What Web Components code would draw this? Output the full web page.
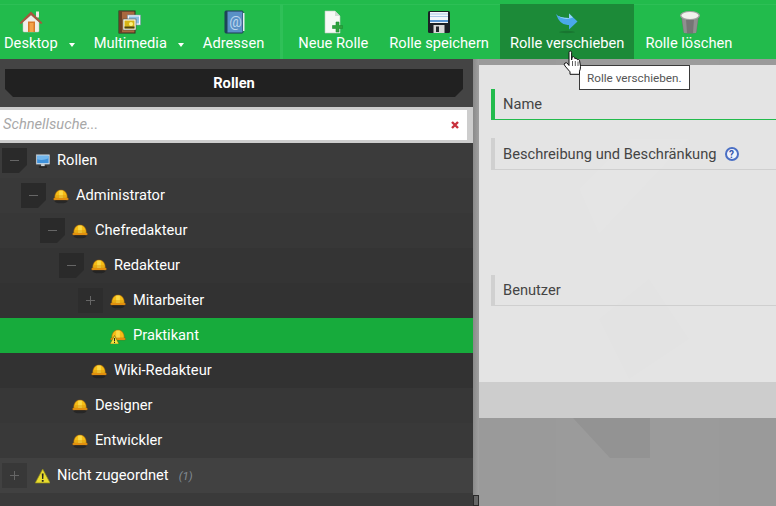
<!DOCTYPE html>
<html lang="de">
<head>
<meta charset="utf-8">
<title>Rollen</title>
<style>
    html, body { margin: 0; height: 506px; overflow: hidden; }
    body { font-family: Roboto, "Liberation Sans", sans-serif; font-size: 14.67px; background: #9a9a9a; }
    main-view { height: 447px; }
</style>
</head>
<body>
<template id="icons">
    <svg data-name="home" viewBox="0 0 24 24"><path d="M4 12v9q0 1 1 1h14q1 0 1-1v-9L12 5z" fill="#f1eeea" stroke="#c9c4bd" stroke-width=".5"/><rect x="17" y="1.500" width="3" height="6" fill="#efe9e2"/><path d="M0.500 13 12 1.500 23.500 13 22 14 12 5 2 14z" fill="#a9553e"/><rect x="9" y="11.500" width="7" height="10.500" fill="#d9792a"/><rect x="10.500" y="13" width="4" height="9" fill="#f4a24a"/></svg>
    <svg data-name="media" viewBox="0 0 24 24"><rect x="1" y="1" width="16" height="22" fill="#a9683f" stroke="#3b2a1e"/><rect x="1" y="1" width="3" height="22" fill="#6b3f26"/><rect x="9.500" y="5" width="13" height="10" fill="#f3f7fb" stroke="#7d98ac" stroke-width=".6"/><rect x="11" y="6.500" width="10" height="7" fill="#8dbfe6"/><rect x="5" y="9" width="13" height="11" fill="#fdfdf6" stroke="#4d4d3e" stroke-width=".6"/><rect x="6.500" y="10.500" width="10" height="8" fill="#d8b414"/><path d="M6.500 16.500h10v2h-10z" fill="#4d4514"/><circle cx="13" cy="14" r="2" fill="#fff27e"/></svg>
    <svg data-name="book" viewBox="0 0 24 24"><rect x="3" y="1" width="18" height="22" rx="1" fill="#5a90c6" stroke="#1f3a52"/><rect x="3" y="1" width="2.500" height="22" fill="#1c4458"/><path d="M21 3h1.500v18H21z" fill="#e8eef3"/><text x="13.500" y="17" font-family="Roboto, sans-serif" font-size="14" fill="#bcd6ee" text-anchor="middle">@</text></svg>
    <svg data-name="new" viewBox="0 0 24 24"><path d="M4 1h10l5 5v17H4z" fill="#f6f9f6" stroke="#b8c9bc" stroke-width=".6"/><path d="M14 1v5h5z" fill="#cfdcd3"/><path d="M15 12h3v3.500h3.500v3H18V22h-3v-3.500h-3.500v-3H15z" fill="#2ea23e" stroke="#1d8f33" stroke-width=".6"/></svg>
    <svg data-name="save" viewBox="0 0 24 24"><rect x="1" y="1" width="22" height="22" rx="1.500" fill="#1c2026"/><rect x="3" y="2" width="18" height="11" fill="#f3f6fa"/><path d="M3 4h18M3 6.500h18" stroke="#a8c7e6" stroke-width="1"/><rect x="3" y="10" width="18" height="2" fill="#5b97d6"/><rect x="6.500" y="15" width="11" height="8" fill="#d7d7d7"/><rect x="9" y="16.500" width="3" height="5.500" fill="#23272d"/></svg>
    <svg data-name="move" viewBox="0 0 24 24"><ellipse cx="12" cy="22" rx="8" ry="1.200" fill="#000" opacity=".14"/><path d="M1 4q3 4 13 4V3.500l8.500 8-8.500 8V15q-9 1-13-11z" fill="#4aa8ea"/><path d="M1 4q3 4 13 4V3.500l4 4q-10 4-17-3.500z" fill="#95d4f8"/></svg>
    <svg data-name="trash" viewBox="0 0 24 24"><path d="M4 5l2.500 17q.2 1.500 6.500 1.500t6.500-1.500L22 5z" fill="#757575"/><path d="M9 9l1 14H7L5 8zM17 9l-1 14h3l2-15z" fill="#8f8f8f"/><ellipse cx="13" cy="5.500" rx="10" ry="4.500" fill="#a4a4a4"/><ellipse cx="13" cy="5.500" rx="8.500" ry="3.500" fill="#f2f2ee"/></svg>
    <svg data-name="monitor" viewBox="-2 -1 18 18"><rect x=".5" y="1" width="15" height="10.500" fill="#e6eaee" stroke="#aab4bd" stroke-width=".6"/><rect x="1.500" y="2" width="13" height="8.500" fill="#3f92dc"/><path d="M1.500 2h13v3q-7 3-13 1z" fill="#72b6ec"/><rect x="6" y="11.500" width="4" height="2.500" fill="#cfd4d8"/><rect x="3.500" y="14" width="9" height="1.500" fill="#1e1e1e"/></svg>
    <svg data-name="hat" viewBox="0 0 16 16"><ellipse cx="8" cy="13.300" rx="6.500" ry="2" fill="#111" opacity=".45"/><path d="M1.700 10.500q0-8.500 6.300-8.500t6.300 8.500z" fill="#f6bd16" stroke="#a8670a" stroke-width=".6"/><path d="M6.100 2.500h3.800v7.500H6.100z" fill="#fbd945"/><path d="M2.500 8h11" stroke="#d8930e" stroke-width=".8"/><rect x=".5" y="10" width="15" height="2" rx="1" fill="#f59d12" stroke="#8f5208" stroke-width=".4"/></svg>
    <svg data-name="hatwarn" viewBox="0 0 16 16"><path d="M1.700 10.500q0-8.500 6.300-8.500t6.300 8.500z" fill="#f6bd16" stroke="#a8670a" stroke-width=".6"/><path d="M6.100 2.500h3.800v7.500H6.100z" fill="#fbd945"/><rect x=".5" y="10" width="15" height="2" rx="1" fill="#f59d12" stroke="#8f5208" stroke-width=".4"/><path d="M4.500 7.500 9 16H0z" fill="#f3e53c" stroke="#55520e" stroke-width=".5"/><path d="M4 10h1v3H4zM4 13.800h1V15H4z" fill="#222"/></svg>
    <svg data-name="warn" viewBox="-.7 0 16 16"><path d="M8 1 15.500 15H.5z" fill="#e9dc2e" stroke="#8f8a1a" stroke-width=".7"/><path d="M7.100 5.500h1.800l-.3 5.500H7.400zM7.100 12h1.800v1.800H7.100z" fill="#222"/></svg>
</template>

<app-toolbar>
    <tool-button plain label="Desktop" caret><app-icon name="home"></app-icon></tool-button>
    <tool-button plain label="Multimedia" caret><app-icon name="media"></app-icon></tool-button>
    <tool-button plain label="Adressen"><app-icon name="book"></app-icon></tool-button>
    <tool-divider></tool-divider>
    <tool-button label="Neue Rolle"><app-icon name="new"></app-icon></tool-button>
    <tool-button label="Rolle speichern"><app-icon name="save"></app-icon></tool-button>
    <tool-button label="Rolle verschieben" active><app-icon name="move"></app-icon></tool-button>
    <tool-button label="Rolle löschen"><app-icon name="trash"></app-icon></tool-button>
</app-toolbar>

<main-view>
    <side-panel slot="side" title-text="Rollen">
        <quick-search placeholder="Schnellsuche..."></quick-search>
        <role-row depth="0" toggle="minus" shade="#3b3b3b" icon="monitor">Rollen</role-row>
        <role-row depth="1" toggle="minus" shade="#393939" icon="hat">Administrator</role-row>
        <role-row depth="2" toggle="minus" shade="#373737" icon="hat">Chefredakteur</role-row>
        <role-row depth="3" toggle="minus" shade="#343434" icon="hat">Redakteur</role-row>
        <role-row depth="4" toggle="plus" shade="#323232" icon="hat">Mitarbeiter</role-row>
        <role-row depth="4" selected icon="hatwarn">Praktikant</role-row>
        <role-row depth="3" shade="#323232" icon="hat">Wiki-Redakteur</role-row>
        <role-row depth="2" shade="#373737" icon="hat">Designer</role-row>
        <role-row depth="2" shade="#393939" icon="hat">Entwickler</role-row>
        <role-row depth="0" toggle="plus" shade="#414141" icon="warn" count="(1)">Nicht zugeordnet</role-row>
    </side-panel>
    <detail-panel slot="detail">
        <form-head accent style="margin-top:24px">Name</form-head>
        <form-head help style="margin-top:18px;height:31px;padding-top:1px;height:30px">Beschreibung und Beschränkung</form-head>
        <form-head style="margin-top:105px">Benutzer</form-head>
    </detail-panel>
</main-view>

<hint-tip>Rolle verschieben.</hint-tip>
<hand-cursor></hand-cursor>

<script>
    const iconSource = document.getElementById('icons').content;

    class AppIcon extends HTMLElement {
        connectedCallback() {
            const shadow = this.shadowRoot || this.attachShadow({ mode: 'open' });
            shadow.innerHTML = `<style>:host { display: block; line-height: 0; } svg { width: 100%; height: 100%; display: block; }</style>`;
            const svg = iconSource.querySelector(`[data-name="${this.getAttribute('name')}"]`);
            shadow.appendChild(svg.cloneNode(true));
        }
    }

    class AppToolbar extends HTMLElement {
        constructor() {
            super();
            this.attachShadow({ mode: 'open' }).innerHTML = `
                <style>
                    :host {
                        display: flex;
                        height: 55px;
                        padding-left: 4px;
                        border-top: 4px solid #22bb4c;
                        background: #22bb4c;
                        box-shadow: inset 0 1px 0 #2dbf56;
                        color: #fff;
                    }
                </style>
                <slot></slot>
            `;
        }
    }

    class ToolButton extends HTMLElement {
        constructor() {
            super();
            const caret = this.hasAttribute('caret') ? '<span class="caret"></span>' : '';
            this.attachShadow({ mode: 'open' }).innerHTML = `
                <style>
                    :host {
                        display: flex;
                        align-items: flex-start;
                        padding: 0 10px;
                        margin-right: 1px;
                    }
                    :host([plain]) { padding: 0; margin-right: 0; }
                    :host([caret]) { margin-right: 19px; }
                    :host([active]) { background: #1c8a38; }
                    .body { display: flex; flex-direction: column; align-items: center; }
                    .icon { width: 24px; height: 24px; margin-top: 6px; }
                    ::slotted(app-icon) { width: 24px; height: 24px; }
                    .label { margin-top: -2px; line-height: 22px; white-space: nowrap; }
                    .caret {
                        margin: 39px 0 0 11px;
                        border: 3.500px solid transparent;
                        border-top: 4px solid #fff;
                        border-bottom: 0;
                    }
                </style>
                <div class="body">
                    <div class="icon"><slot></slot></div>
                    <div class="label">${this.getAttribute('label')}</div>
                </div>
                ${caret}
            `;
        }
    }

    class ToolDivider extends HTMLElement {
        constructor() {
            super();
            this.attachShadow({ mode: 'open' }).innerHTML = `
                <style>:host { display: block; width: 3px; margin: 0 5px 0 16px; background: #2fc058; }</style>
            `;
        }
    }

    class MainView extends HTMLElement {
        constructor() {
            super();
            this.attachShadow({ mode: 'open' }).innerHTML = `
                <style>
                    :host { display: flex; position: relative; overflow: hidden; }
                    .side { width: 473px; flex: none; display: flex; }
                    .split {
                        width: 6px;
                        flex: none;
                        display: flex;
                        flex-direction: column;
                        justify-content: flex-end;
                        background: linear-gradient(90deg, #8a8a8a, #a0a0a0);
                    }
                    .grip { height: 11px; box-sizing: border-box; border: 1px solid #2a2a2a; background: #666; }
                    .detail { flex: 1; min-width: 0; display: flex; position: relative; }
                    .facets { position: absolute; inset: 0; width: 100%; height: 100%; }
                </style>
                <div class="side"><slot name="side"></slot></div>
                <div class="split"><div class="grip"></div></div>
                <div class="detail">
                    <svg class="facets" viewBox="0 0 297 447" preserveAspectRatio="none">
                        <path d="M77 0h95v447H77z" fill="#fff" opacity=".015"/>
                        <path d="M172 0h68v447h-68z" fill="#fff" opacity=".02"/>
                        <path d="M94 359h77v40h-40z" fill="#000" opacity=".05"/>
                        <path d="M100 130 150 80h60L120 175z" fill="#fff" opacity=".03"/>
                        <path d="M120 260l50-40 40 60-60 40z" fill="#000" opacity=".015"/>
                    </svg>
                    <slot name="detail"></slot>
                </div>
            `;
        }
    }

    class SidePanel extends HTMLElement {
        constructor() {
            super();
            this.attachShadow({ mode: 'open' }).innerHTML = `
                <style>
                    :host { display: flex; flex-direction: column; flex: 1; background: #3a3a3a; color: #fff; }
                    .head { height: 48px; flex: none; box-sizing: border-box; padding: 10px 10px 10px 5px; background: #444; }
                    .bar {
                        height: 28px;
                        display: flex;
                        align-items: center;
                        justify-content: center;
                        background: #212121;
                        font-weight: 700;
                        clip-path: polygon(0 0, 100% 0, 100% 20px, calc(100% - 8px) 100%, 8px 100%, 0 20px);
                    }
                </style>
                <div class="head"><div class="bar">${this.getAttribute('title-text')}</div></div>
                <slot></slot>
            `;
        }
    }

    class QuickSearch extends HTMLElement {
        constructor() {
            super();
            this.attachShadow({ mode: 'open' }).innerHTML = `
                <style>
                    :host {
                        display: flex;
                        height: 36px;
                        flex: none;
                        box-sizing: border-box;
                        padding: 3px 6px 3px 0;
                        background: #cdcdcd;
                    }
                    .field {
                        flex: 1;
                        display: flex;
                        align-items: center;
                        justify-content: space-between;
                        padding: 0 8px 0 3px;
                        background: #fff;
                    }
                    input {
                        flex: 1;
                        border: 0;
                        padding: 0 0 2px;
                        outline: 0;
                        background: none;
                        font: italic 14.670px Roboto, sans-serif;
                    }
                    input::placeholder { color: #a8a8a8; opacity: 1; }
                    svg { width: 8px; height: 8px; flex: none; }
                </style>
                <div class="field">
                    <input placeholder="${this.getAttribute('placeholder')}">
                    <svg viewBox="0 0 8 8"><path d="M1 1l6 6M7 1L1 7" stroke="#c8303c" stroke-width="2.400"/></svg>
                </div>
            `;
        }
    }

    class RoleRow extends HTMLElement {
        constructor() {
            super();
            const toggle = this.getAttribute('toggle');
            const depth = Number(this.getAttribute('depth') || 0);
            const shade = this.hasAttribute('selected') ? '#17ab3c' : this.getAttribute('shade');
            const count = this.getAttribute('count');
            const glyph = toggle === 'minus'
                ? '<path d="M8 12.500h9" stroke="#666" stroke-width="1"/>'
                : '<path d="M8 12.500h9M12.500 8v9" stroke="#666" stroke-width="1"/>';
            const box = toggle
                ? `<svg class="toggle" viewBox="0 0 25 25"><path d="${toggle === 'minus' ? 'M0 0h25v17l-8 8H0z' : 'M0 0h25v25H0z'}" fill="${toggle === 'minus' ? '#2a2a2a' : (depth ? '#2d2d2d' : '#383838')}"/>${glyph}</svg>`
                : '<span class="toggle"></span>';
            this.attachShadow({ mode: 'open' }).innerHTML = `
                <style>
                    :host {
                        display: flex;
                        align-items: center;
                        height: 35px;
                        flex: none;
                        box-sizing: border-box;
                        padding-left: ${2 + depth * 19}px;
                        background: ${shade};
                        color: #fff;
                    }
                    .toggle { width: 25px; height: 25px; flex: none; display: block; }
                    app-icon { width: 16px; height: 16px; margin: 0 7px; flex: none; }
                    .text { margin-bottom: 2px; }
                    .count { margin: 0 0 0 10px; font-size: 11.500px; font-style: italic; color: #828c94; }
                </style>
                ${box}
                <app-icon name="${this.getAttribute('icon')}"></app-icon>
                <span class="text"><slot></slot></span>
                ${count ? `<span class="count">${count}</span>` : ''}
            `;
        }
    }

    class DetailPanel extends HTMLElement {
        constructor() {
            super();
            this.attachShadow({ mode: 'open' }).innerHTML = `
                <style>
                    :host {
                        position: relative;
                        flex: 1;
                        display: flex;
                        flex-direction: column;
                        margin: 6px 0 88px;
                        background: rgba(255, 255, 255, 0.5);
                    }
                    .body {
                        height: 317px;
                        box-sizing: border-box;
                        padding-left: 12px;
                        background: rgba(255, 255, 255, 0.46);
                        color: #444;
                    }
                </style>
                <div class="body"><slot></slot></div>
            `;
        }
    }

    class FormHead extends HTMLElement {
        constructor() {
            super();
            const help = this.hasAttribute('help') ? '<span class="help">?</span>' : '';
            this.attachShadow({ mode: 'open' }).innerHTML = `
                <style>
                    :host {
                        display: flex;
                        align-items: center;
                        height: 30px;
                        padding-left: 8px;
                        border-left: 4px solid #d0d0d0;
                        border-bottom: 1px solid #cfcfcf;
                        color: #444;
                    }
                    :host([accent]) { border-left-color: #22bb4c; border-bottom-color: #22bb4c; }
                    .help {
                        width: 10px;
                        height: 10px;
                        margin-left: 8px;
                        display: flex;
                        align-items: center;
                        justify-content: center;
                        border: 2px solid #4a6fc4;
                        border-radius: 50%;
                        background: #f0f3fb;
                        color: #3355aa;
                        font-size: 10px;
                        font-weight: 700;
                    }
                </style>
                <slot></slot>${help}
            `;
        }
    }

    class HintTip extends HTMLElement {
        constructor() {
            super();
            this.attachShadow({ mode: 'open' }).innerHTML = `
                <style>
                    :host {
                        position: absolute;
                        left: 579px;
                        top: 65px;
                        width: 111px;
                        height: 25px;
                        box-sizing: border-box;
                        display: flex;
                        align-items: center;
                        padding-left: 7px;
                        border: 1px solid #3a3a3a;
                        background: #fff;
                        color: #555;
                        font-size: 11.730px;
                        white-space: nowrap;
                    }
                </style>
                <slot></slot>
            `;
        }
    }

    class HandCursor extends HTMLElement {
        constructor() {
            super();
            this.attachShadow({ mode: 'open' }).innerHTML = `
                <style>
                    :host { position: absolute; left: 563px; top: 50px; width: 20px; height: 26px; }
                    svg { display: block; width: 100%; height: 100%; }
                </style>
                <svg viewBox="0 0 20 26">
                    <path d="M6 2.500q0-1.500 1.300-1.500t1.300 1.500V10l.6-3q1.700-.8 2.300.5l.3 1q1.500-.8 2.300.5l.2.700q1.500-.6 2.200.6l1 6q0 3-1 5v3H7v-2.500L2 16q-1.500-2 0-3t3 1l1 1.500z" fill="#fff" stroke="#111" stroke-width="1" stroke-linejoin="round"/>
                    <path d="M9.500 11v5M12.300 11v5M15 11.500V16" stroke="#333" stroke-width=".8"/>
                </svg>
            `;
        }
    }

    customElements.define('app-icon', AppIcon);
    customElements.define('app-toolbar', AppToolbar);
    customElements.define('tool-button', ToolButton);
    customElements.define('tool-divider', ToolDivider);
    customElements.define('main-view', MainView);
    customElements.define('side-panel', SidePanel);
    customElements.define('quick-search', QuickSearch);
    customElements.define('role-row', RoleRow);
    customElements.define('detail-panel', DetailPanel);
    customElements.define('form-head', FormHead);
    customElements.define('hint-tip', HintTip);
    customElements.define('hand-cursor', HandCursor);
</script>
</body>
</html>
